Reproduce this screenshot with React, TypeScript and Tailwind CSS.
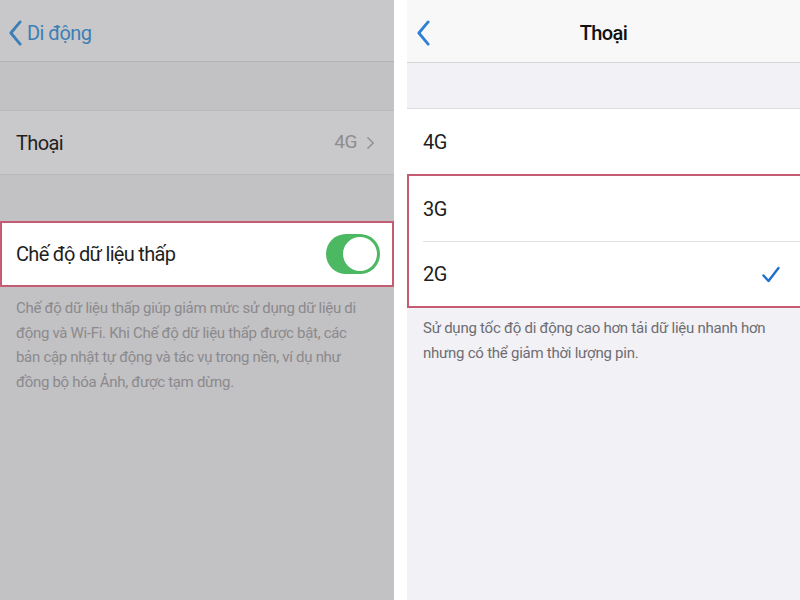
const font = { fontFamily: "Roboto, 'Noto Sans', sans-serif" };

function Chevron({ className }: { className: string }) {
  return (
    <svg viewBox="0 0 14 28" className={className} fill="none" stroke="currentColor" strokeWidth="3" strokeLinecap="round" strokeLinejoin="round">
      <path d="M12 2 L2 14 L12 26" />
    </svg>
  );
}

export default function App() {
  return (
    <div className="flex h-[600px] w-[800px] overflow-hidden bg-white font-['Roboto',sans-serif]" style={font}>
      {/* Left screen, dimmed */}
      <div className="flex w-[394px] flex-col bg-[#c2c1c3]">
        <div className="flex h-[62px] items-center border-b border-[#b4b3b5] bg-[#c8c7c9] pl-[9px] pt-[4px]">
          <Chevron className="h-[28px] w-[13px] text-[#3b7fb6]" />
          <span className="ml-[5px] text-[20px] tracking-[-0.6px] text-[#3b7fb6]">Di động</span>
        </div>
        <div className="h-[48px]" />
        <div className="flex h-[65px] items-center justify-between border-y border-[#b8b7b9] bg-[#c9c8ca] pl-[16px] pr-[20px]">
          <span className="text-[20px] tracking-[-0.6px] text-[#1f1f1f]">Thoại</span>
          <div className="flex items-center gap-[10px] text-[#8e8d90]">
            <span className="text-[19px] tracking-[-0.4px]">4G</span>
            <svg viewBox="0 0 8 14" className="h-[14px] w-[7px]" fill="none" stroke="currentColor" strokeWidth="1.6" strokeLinecap="round" strokeLinejoin="round">
              <path d="M1 1 L7 7 L1 13" />
            </svg>
          </div>
        </div>
        <div className="h-[46px]" />
        <div className="flex h-[66px] items-center justify-between border-2 border-[#c65c74] bg-white pl-[14px] pr-[12px]">
          <span className="text-[20px] tracking-[-0.7px] text-[#1f1f1f]">Chế độ dữ liệu thấp</span>
          <div className="flex h-[40px] w-[54px] items-center justify-end rounded-full bg-[#4cb862] pr-[3px]">
            <div className="h-[34px] w-[34px] rounded-full bg-white" />
          </div>
        </div>
        <p className="pl-[16px] pr-[30px] pt-[9px] text-[15px] leading-[24.5px] tracking-[-0.3px] text-[#8b8a8d]">
          Chế độ dữ liệu thấp giúp giảm mức sử dụng dữ liệu di động và Wi-Fi. Khi Chế độ dữ liệu thấp được bật, các bản cập nhật tự động và tác vụ trong nền, ví dụ như đồng bộ hóa Ảnh, được tạm dừng.
        </p>
      </div>

      {/* Gap between screens */}
      <div className="w-[13px] bg-white" />

      {/* Right screen */}
      <div className="flex flex-1 flex-col bg-[#f2f1f6]">
        <div className="relative flex h-[63px] items-center justify-center border-b border-[#d6d6d8] bg-[#f8f8f8] pt-[4px]">
          <Chevron className="absolute left-[10px] top-[19px] h-[28px] w-[13px] text-[#2f7fd4]" />
          <span className="text-[20px] font-medium tracking-[-0.6px] text-[#111]">Thoại</span>
        </div>
        <div className="h-[46px] border-b border-[#dcdce0]" />
        <div className="flex h-[65px] items-center bg-white pl-[16px]">
          <span className="text-[20px] tracking-[-0.4px] text-[#1f1f1f]">4G</span>
        </div>
        <div className="border-y-2 border-l-2 border-[#c65c74] bg-white">
          <div className="flex h-[65px] items-center pl-[14px]">
            <span className="text-[20px] tracking-[-0.4px] text-[#1f1f1f]">3G</span>
          </div>
          <div className="ml-[14px] h-px bg-[#e0e0e3]" />
          <div className="flex h-[64px] items-center justify-between pl-[14px] pr-[20px]">
            <span className="text-[20px] tracking-[-0.4px] text-[#1f1f1f]">2G</span>
            <svg viewBox="0 0 18 16" className="h-[17px] w-[18px]" fill="none" stroke="#1f6fcf" strokeWidth="2.4" strokeLinecap="round" strokeLinejoin="round">
              <path d="M1.5 9 L6.5 14.5 L16.5 1.5" />
            </svg>
          </div>
        </div>
        <p className="px-[16px] pt-[8px] text-[15px] leading-[24.5px] tracking-[-0.25px] text-[#6e6d72]">
          Sử dụng tốc độ di động cao hơn tải dữ liệu nhanh hơn nhưng có thể giảm thời lượng pin.
        </p>
      </div>
    </div>
  );
}
